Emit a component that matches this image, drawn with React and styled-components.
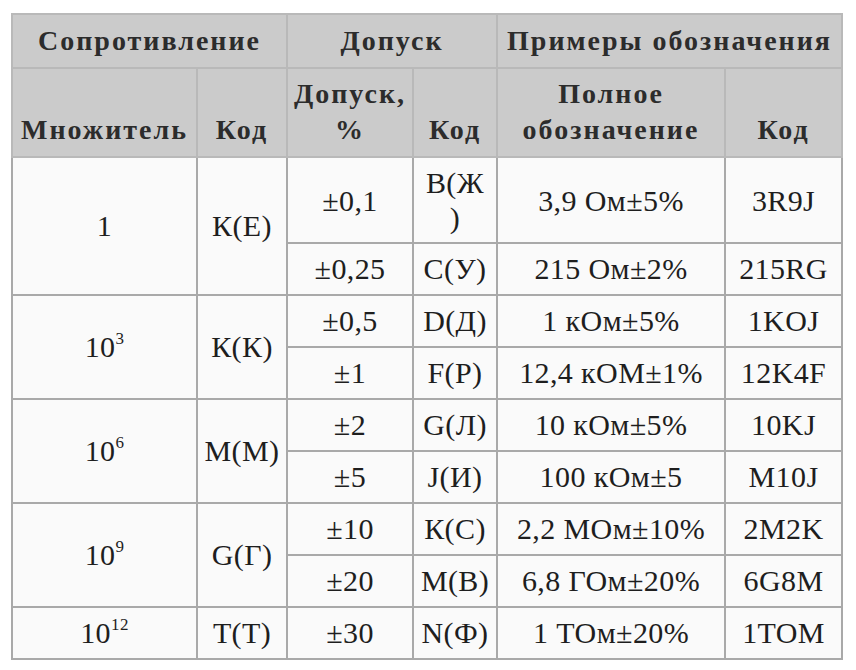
import React from 'react'
import styled from 'styled-components'

const FONT = '"Liberation Serif", Tinos, "Times New Roman", serif'
const font = () => FONT

// body keeps its default 8px margin, the page padding tops it up
const Page = styled.div`
  padding: 5px 0 0 3px;
  background: #ffffff;
  font-family: ${font};
`

const Table = styled.table`
  border-collapse: collapse;
  table-layout: fixed;
  width: 830px;
  border: 2px solid #a3a3a3;
  font-family: ${font};
`

const Col = styled.col`
  width: ${p => p.$w}px;
`

const Head = styled.th`
  font-family: ${font};
  background: #cbcbcb;
  border: 2px solid #b9b9b9;
  color: #2c2c2c;
  font-size: 28px;
  font-weight: bold;
  line-height: 36px;
  letter-spacing: 2px;
  padding: ${p => (p.$top ? '8px 0' : '7px 0 8px')};
  vertical-align: ${p => (p.$top ? 'middle' : 'bottom')};
  text-align: center;
  white-space: nowrap;
`

const Cell = styled.td`
  font-family: ${font};
  background: #fafafa;
  border: 2px solid #a9a9a9;
  color: #1e1e1e;
  font-size: 30px;
  line-height: ${p => (p.$tall ? '35px' : '36px')};
  letter-spacing: 0.4px;
  padding: 7px 0;
  text-align: center;
  vertical-align: middle;
  white-space: nowrap;
`

const Sup = styled.sup`
  font-size: 17px;
  line-height: 0;
  vertical-align: 13px;
`

const Pow = ({ n }) => (
  <>
    10<Sup>{n}</Sup>
  </>
)

const groups = [
  {
    mult: '1',
    code: 'К(Е)',
    rows: [
      ['±0,1', <>В(Ж<br />)</>, '3,9 Ом±5%', '3R9J'],
      ['±0,25', 'С(У)', '215 Ом±2%', '215RG'],
    ],
  },
  {
    mult: <Pow n="3" />,
    code: 'К(К)',
    rows: [
      ['±0,5', 'D(Д)', '1 кОм±5%', '1KOJ'],
      ['±1', 'F(Р)', '12,4 кОМ±1%', '12K4F'],
    ],
  },
  {
    mult: <Pow n="6" />,
    code: 'М(М)',
    rows: [
      ['±2', 'G(Л)', '10 кОм±5%', '10KJ'],
      ['±5', 'J(И)', '100 кОм±5', 'M10J'],
    ],
  },
  {
    mult: <Pow n="9" />,
    code: 'G(Г)',
    rows: [
      ['±10', 'К(С)', '2,2 МОм±10%', '2M2K'],
      ['±20', 'М(В)', '6,8 ГОм±20%', '6G8M'],
    ],
  },
  {
    mult: <Pow n="12" />,
    code: 'Т(Т)',
    rows: [['±30', 'N(Ф)', '1 ТОм±20%', '1TOM']],
  },
]

export default function App() {
  return (
    <Page>
      <Table>
        <colgroup>
          <Col $w={185} />
          <Col $w={90} />
          <Col $w={126} />
          <Col $w={84} />
          <Col $w={228} />
          <Col $w={117} />
        </colgroup>
        <thead>
          <tr>
            <Head $top colSpan={2}>Сопротивление</Head>
            <Head $top colSpan={2}>Допуск</Head>
            <Head $top colSpan={2}>Примеры обозначения</Head>
          </tr>
          <tr>
            <Head>Множитель</Head>
            <Head>Код</Head>
            <Head>Допуск,<br />%</Head>
            <Head>Код</Head>
            <Head>Полное<br />обозначение</Head>
            <Head>Код</Head>
          </tr>
        </thead>
        <tbody>
          {groups.map((g, gi) =>
            g.rows.map((r, ri) => (
              <tr key={gi + '-' + ri}>
                {ri === 0 && <Cell rowSpan={g.rows.length}>{g.mult}</Cell>}
                {ri === 0 && <Cell rowSpan={g.rows.length}>{g.code}</Cell>}
                {r.map((v, i) => (
                  <Cell key={i} $tall={gi === 0 && ri === 0}>{v}</Cell>
                ))}
              </tr>
            ))
          )}
        </tbody>
      </Table>
    </Page>
  )
}
